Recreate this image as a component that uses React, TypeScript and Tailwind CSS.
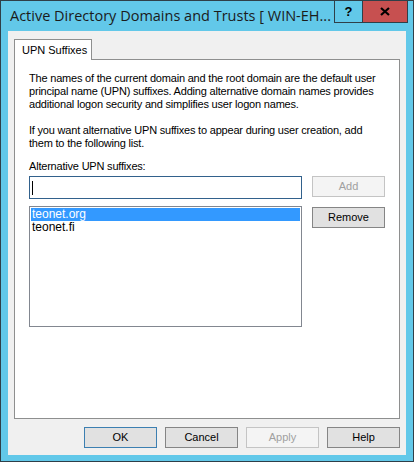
const font = { fontFamily: '"Liberation Sans", Arial, sans-serif' };

function Button({
  label,
  disabled = false,
  primary = false,
}: {
  label: string;
  disabled?: boolean;
  primary?: boolean;
}) {
  const tone = disabled
    ? 'bg-[#f4f4f4] border-[#c4c4c4] text-[#a0a0a0]'
    : primary
      ? 'bg-[#e1e1e1] border-[#3c7fb1] text-black'
      : 'bg-[#e1e1e1] border-[#858585] text-black';
  return (
    <div
      className={`w-[73px] h-[21px] border flex items-center justify-center text-[11px] leading-none ${tone}`}
    >
      {label}
    </div>
  );
}

export default function App() {
  return (
    <div className="bg-white w-[415px] h-[464px]" style={font}>
      <div className="w-[414px] h-[462px] bg-[#62c8e9] border border-[#2f3f48] flex flex-col">
        {/* title bar */}
        <div className="h-[30px] flex items-start justify-between">
          <div
            className="pl-[9px] pt-[6px] text-[14.5px] leading-[18px] text-[#1b1b1b] whitespace-nowrap"
            style={{ fontFamily: '"Open Sans", "Noto Sans", sans-serif' }}
          >
            Active Directory Domains and Trusts [ WIN-EH...
          </div>
          <div className="flex -mt-px mr-[5px]">
            <div className="w-[29px] h-[23px] border border-[#2f3f48] flex items-center justify-center text-[13px] font-bold text-black">
              ?
            </div>
            <div className="w-[46px] h-[23px] -ml-px bg-[#c75050] border border-[#2f3f48] flex items-center justify-center">
              <svg width="10" height="9" viewBox="0 0 10 9">
                <path d="M1 1 L9 8 M9 1 L1 8" stroke="#000" strokeWidth="2.2" />
              </svg>
            </div>
          </div>
        </div>

        {/* client area */}
        <div className="mx-[7px] h-[424px] bg-[#f0f0f0] px-[6px] pt-[8px] flex flex-col">
          <div className="flex">
            <div className="relative z-10 -mb-px h-[21px] w-[78px] bg-white border border-b-0 border-[#8e8f8f] pl-[7px] pt-[4px] text-[11px] leading-[13px] text-black">
              UPN Suffixes
            </div>
          </div>
          <div className="h-[360px] bg-white border border-[#8e8f8f] pl-[14px] pt-[12px] text-[11px] leading-[13px] tracking-[-0.2px] text-black flex flex-col">
            <p className="whitespace-nowrap">
              The names of the current domain and the root domain are the default user
              <br />
              principal name (UPN) suffixes. Adding alternative domain names provides
              <br />
              additional logon security and simplifies user logon names.
            </p>
            <p className="mt-[13px] whitespace-nowrap">
              If you want alternative UPN suffixes to appear during user creation, add
              <br />
              them to the following list.
            </p>
            <div className="mt-[10px]">Alternative UPN suffixes:</div>
            <div className="mt-[3px] flex gap-[10px] tracking-normal">
              <div className="w-[273px] h-[23px] bg-white border border-[#32618c] flex items-center pl-[2px]">
                <div className="w-px h-[14px] bg-black" />
              </div>
              <Button label="Add" disabled />
            </div>
            <div className="mt-[7px] flex gap-[10px] items-start tracking-normal">
              <div className="w-[273px] h-[121px] bg-white border border-[#828790] p-px">
                <div className="h-[13px] bg-[#3399ff] text-white pl-[1px] text-[12px] leading-[13px]">
                  teonet.org
                </div>
                <div className="h-[13px] pl-[1px] text-[12px] leading-[13px]">teonet.fi</div>
              </div>
              <div className="mt-px">
                <Button label="Remove" />
              </div>
            </div>
          </div>
          <div className="mt-[8px] flex justify-end gap-[8px]">
            <Button label="OK" primary />
            <Button label="Cancel" />
            <Button label="Apply" disabled />
            <Button label="Help" />
          </div>
        </div>
      </div>
    </div>
  );
}
